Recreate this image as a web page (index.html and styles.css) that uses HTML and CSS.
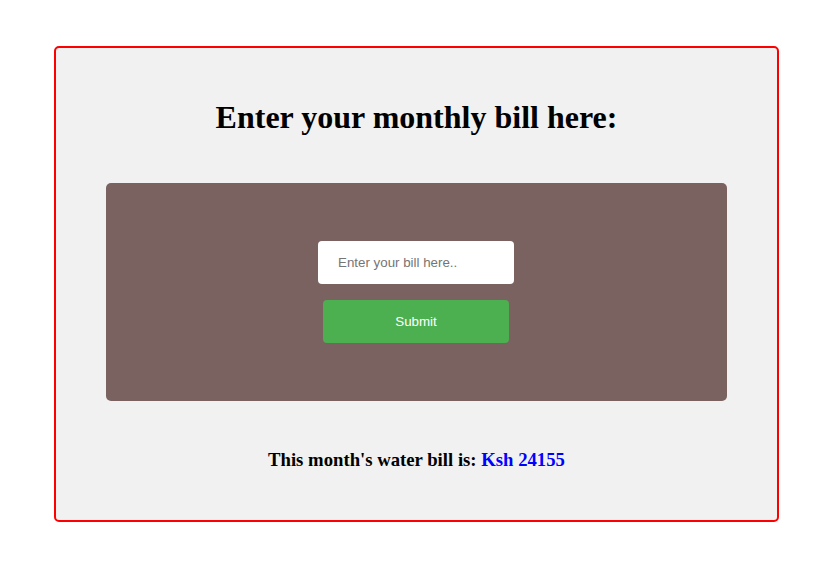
FILE: index.html
```html
<!DOCTYPE html>
<html>
<head>
<meta charset="utf-8">
<link rel="stylesheet" href="styles.css">
</head>
<body>
<div class="card">
  <h1 class="title">Enter your monthly bill here:</h1>
  <div class="panel">
    <form class="bill-form">
      <input class="bill-input" type="text" placeholder="Enter your bill here..">
      <button class="bill-submit" type="button">Submit</button>
    </form>
  </div>
  <p class="result">This month's water bill is: <span class="amount">Ksh 24155</span></p>
</div>
</body>
</html>
```

FILE: styles.css
```css
html, body {
  margin: 0;
  padding: 0;
  background: #ffffff;
}
body {
  padding: 46px 0 0 54px;
  font-family: "Liberation Serif", "Times New Roman", serif;
}
.card {
  box-sizing: border-box;
  width: 725px;
  height: 476px;
  border: 2px solid #ff0000;
  border-radius: 5px;
  background: #f1f1f1;
  padding: 51px 50px 0 50px;
}
.title {
  margin: 0;
  font-size: 32px;
  font-weight: bold;
  text-align: center;
  line-height: 37px;
  color: #000;
}
.panel {
  box-sizing: border-box;
  margin-top: 47px;
  height: 218px;
  padding-right: 1px;
  background: #7a6260;
  border-radius: 5px;
  display: flex;
  align-items: center;
  justify-content: center;
}
.bill-form {
  display: flex;
  flex-direction: column;
  align-items: center;
  gap: 16px;
}
.bill-input {
  box-sizing: border-box;
  width: 196px;
  height: 43px;
  border: none;
  border-radius: 4px;
  padding: 0 20px;
  background: #fff;
  font-family: "Liberation Sans", Arial, sans-serif;
  font-size: 13.333px;
  outline: none;
}
.bill-input::placeholder {
  color: #757575;
}
.bill-submit {
  box-sizing: border-box;
  width: 186px;
  height: 43px;
  border: none;
  border-radius: 4px;
  background: #4caf50;
  color: #fff;
  font-family: "Liberation Sans", Arial, sans-serif;
  font-size: 13.333px;
}
.result {
  margin: 48px 0 0 0;
  text-align: center;
  font-size: 18.72px;
  font-weight: bold;
  line-height: 22px;
  color: #000;
}
.amount {
  color: #0000ff;
}
```
